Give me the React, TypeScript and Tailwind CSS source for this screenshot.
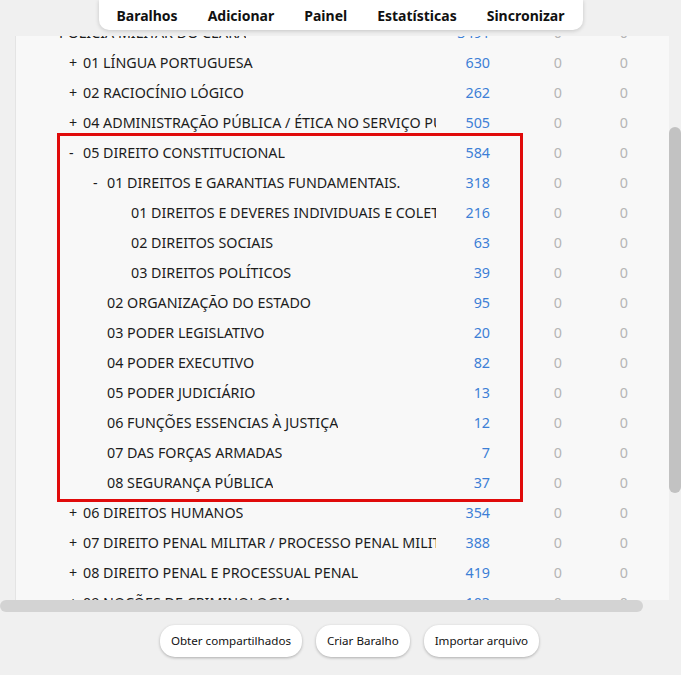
import React from "react";

type Row = { level: number; exp: string; name: string; count: string };

const rows: Row[] = [
  { level: 0, exp: "-", name: "POLICIA MILITAR DO CEARÁ", count: "3491" },
  { level: 1, exp: "+", name: "01 LÍNGUA PORTUGUESA", count: "630" },
  { level: 1, exp: "+", name: "02 RACIOCÍNIO LÓGICO", count: "262" },
  { level: 1, exp: "+", name: "04 ADMINISTRAÇÃO PÚBLICA / ÉTICA NO SERVIÇO PÚBLICO", count: "505" },
  { level: 1, exp: "-", name: "05 DIREITO CONSTITUCIONAL", count: "584" },
  { level: 2, exp: "-", name: "01 DIREITOS E GARANTIAS FUNDAMENTAIS.", count: "318" },
  { level: 3, exp: "", name: "01 DIREITOS E DEVERES INDIVIDUAIS E COLETIVOS", count: "216" },
  { level: 3, exp: "", name: "02 DIREITOS SOCIAIS", count: "63" },
  { level: 3, exp: "", name: "03 DIREITOS POLÍTICOS", count: "39" },
  { level: 2, exp: "", name: "02 ORGANIZAÇÃO DO ESTADO", count: "95" },
  { level: 2, exp: "", name: "03 PODER LEGISLATIVO", count: "20" },
  { level: 2, exp: "", name: "04 PODER EXECUTIVO", count: "82" },
  { level: 2, exp: "", name: "05 PODER JUDICIÁRIO", count: "13" },
  { level: 2, exp: "", name: "06 FUNÇÕES ESSENCIAS À JUSTIÇA", count: "12" },
  { level: 2, exp: "", name: "07 DAS FORÇAS ARMADAS", count: "7" },
  { level: 2, exp: "", name: "08 SEGURANÇA PÚBLICA", count: "37" },
  { level: 1, exp: "+", name: "06 DIREITOS HUMANOS", count: "354" },
  { level: 1, exp: "+", name: "07 DIREITO PENAL MILITAR / PROCESSO PENAL MILITAR", count: "388" },
  { level: 1, exp: "+", name: "08 DIREITO PENAL E PROCESSUAL PENAL", count: "419" },
  { level: 1, exp: "+", name: "09 NOÇÕES DE CRIMINOLOGIA", count: "103" },
];

const FONT = { fontFamily: '"Noto Sans", "Open Sans", sans-serif' };

function DeckRow({ row }: { row: Row }) {
  return (
    <div className="flex h-[30px] items-center whitespace-nowrap">
      <div
        className="flex w-[420px] items-center overflow-hidden text-[#1c1c1c]"
        style={{ paddingLeft: 29 + row.level * 24 }}
      >
        <span className="w-[14px] shrink-0">{row.exp}</span>
        <span className="min-w-0 overflow-hidden">{row.name}</span>
      </div>
      <div className="w-[54px] shrink-0 text-right text-[#3d7fd6]">{row.count}</div>
      <div className="w-[72px] shrink-0 text-right text-[#b5b5b5]">0</div>
      <div className="w-[66px] shrink-0 text-right text-[#b5b5b5]">0</div>
    </div>
  );
}

export default function App() {
  const nav = ["Baralhos", "Adicionar", "Painel", "Estatísticas", "Sincronizar"];
  const buttons = ["Obter compartilhados", "Criar Baralho", "Importar arquivo"];
  return (
    <div className="flex h-[675px] w-[681px] flex-col overflow-hidden bg-[#f0f0f0]" style={FONT}>
      {/* top toolbar */}
      <div className="flex h-[36px] shrink-0 justify-center">
        <nav className="flex h-[30px] items-center rounded-b-[10px] bg-white px-[3px] shadow-[0_1px_4px_rgba(0,0,0,0.18)]">
          {nav.map((n) => (
            <span key={n} className="px-[15px] text-[14px] font-bold text-[#111]">
              {n}
            </span>
          ))}
        </nav>
      </div>

      {/* deck list with scrollbars */}
      <div className="flex h-[564px] shrink-0">
        <div className="flex-1 overflow-hidden pl-[15px]">
          <div className="h-full overflow-hidden border-l border-[#e4e4e4] bg-[#f8f8f8]">
            <div className="relative mt-[-18px] text-[14.3px]">
              {rows.map((r, i) => (
                <DeckRow key={i} row={r} />
              ))}
              <div className="pointer-events-none absolute left-[41px] top-[115px] h-[369px] w-[466px] border-[3px] border-[#e00a0a]" />
            </div>
          </div>
        </div>
        <div className="w-[12px] shrink-0 pt-[91px]">
          <div className="h-[366px] w-full rounded-full bg-[#c2c2c2]" />
        </div>
      </div>
      <div className="h-[12px] shrink-0">
        <div className="h-full w-[643px] rounded-full bg-[#d3d3d3]" />
      </div>

      {/* bottom buttons */}
      <div className="flex justify-center gap-[14px] pl-[18px] pt-[13px]">
        {buttons.map((b) => (
          <button
            key={b}
            className="h-[32px] rounded-[15px] bg-white px-[11px] text-[11.6px] text-[#111] shadow-[0_1px_3px_rgba(0,0,0,0.28)]"
          >
            {b}
          </button>
        ))}
      </div>
    </div>
  );
}
